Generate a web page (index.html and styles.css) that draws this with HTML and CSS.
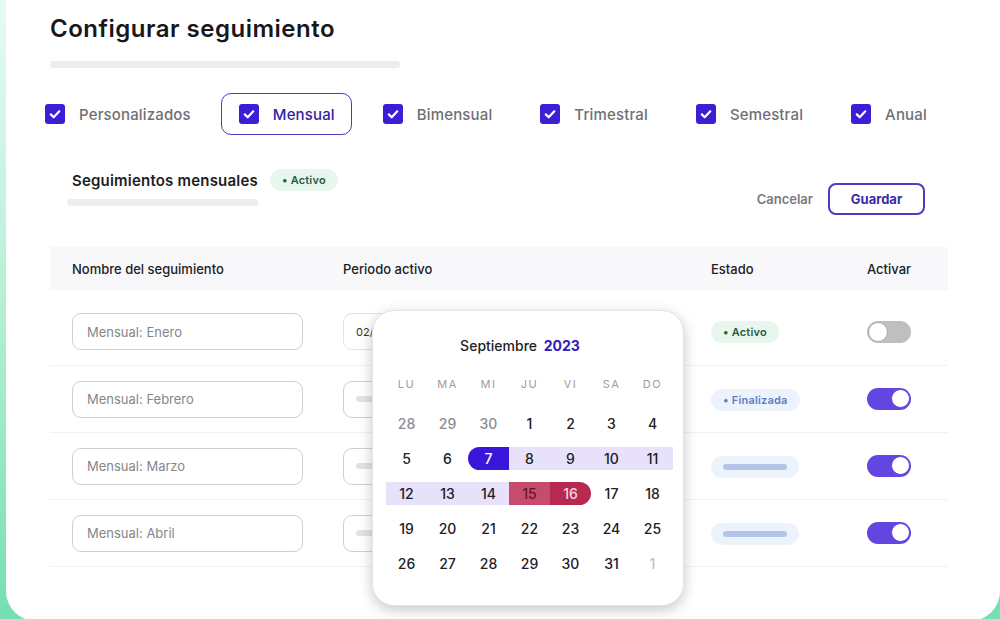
FILE: index.html
```html
<!DOCTYPE html>
<html>
<head>
  <title>Configurar seguimiento</title>
  <meta charset="UTF-8">
  <link rel="stylesheet" href="styles.css">
</head>
<body>
  <div class="card">
    <h1 class="title">Configurar seguimiento</h1>
    <div class="bar title-bar"></div>

    <div class="filters">
      <label class="filter">
        <svg class="check" viewBox="0 0 20 20"><rect width="20" height="20" rx="3"/><path d="M5.8 10.4l2.9 2.9 5.6-6"/></svg>
        <span>Personalizados</span>
      </label>
      <label class="filter active">
        <svg class="check" viewBox="0 0 20 20"><rect width="20" height="20" rx="3"/><path d="M5.8 10.4l2.9 2.9 5.6-6"/></svg>
        <span>Mensual</span>
      </label>
      <label class="filter">
        <svg class="check" viewBox="0 0 20 20"><rect width="20" height="20" rx="3"/><path d="M5.8 10.4l2.9 2.9 5.6-6"/></svg>
        <span>Bimensual</span>
      </label>
      <label class="filter">
        <svg class="check" viewBox="0 0 20 20"><rect width="20" height="20" rx="3"/><path d="M5.8 10.4l2.9 2.9 5.6-6"/></svg>
        <span>Trimestral</span>
      </label>
      <label class="filter">
        <svg class="check" viewBox="0 0 20 20"><rect width="20" height="20" rx="3"/><path d="M5.8 10.4l2.9 2.9 5.6-6"/></svg>
        <span>Semestral</span>
      </label>
      <label class="filter">
        <svg class="check" viewBox="0 0 20 20"><rect width="20" height="20" rx="3"/><path d="M5.8 10.4l2.9 2.9 5.6-6"/></svg>
        <span>Anual</span>
      </label>
    </div>

    <div class="section-head">
      <div class="section-left">
        <div class="section-title">
          <h2>Seguimientos mensuales</h2>
          <span class="badge green">&bull; Activo</span>
        </div>
        <div class="bar section-bar"></div>
      </div>
      <div class="actions">
        <button class="btn-text">Cancelar</button>
        <button class="btn-outline">Guardar</button>
      </div>
    </div>

    <div class="table">
      <div class="thead">
        <div>Nombre del seguimiento</div>
        <div>Periodo activo</div>
        <div>Estado</div>
        <div>Activar</div>
      </div>
      <div class="row first">
        <div><div class="field">Mensual: Enero</div></div>
        <div><div class="field period current">02/09/2023 - 30/09/2023</div></div>
        <div><span class="badge green">&bull; Activo</span></div>
        <div><span class="toggle"></span></div>
      </div>
      <div class="row">
        <div><div class="field">Mensual: Febrero</div></div>
        <div><div class="field period"><span class="ghost"></span></div></div>
        <div><span class="badge blue">&bull; Finalizada</span></div>
        <div><span class="toggle on"></span></div>
      </div>
      <div class="row">
        <div><div class="field">Mensual: Marzo</div></div>
        <div><div class="field period"><span class="ghost"></span></div></div>
        <div><span class="badge blue empty"><span class="ghost-bar"></span></span></div>
        <div><span class="toggle on"></span></div>
      </div>
      <div class="row">
        <div><div class="field">Mensual: Abril</div></div>
        <div><div class="field period"><span class="ghost"></span></div></div>
        <div><span class="badge blue empty"><span class="ghost-bar"></span></span></div>
        <div><span class="toggle on"></span></div>
      </div>
    </div>

    <div class="calendar">
      <div class="cal-head">Septiembre <b>2023</b></div>
      <div class="weekdays">
        <span>LU</span><span>MA</span><span>MI</span><span>JU</span><span>VI</span><span>SA</span><span>DO</span>
      </div>
      <div class="days">
        <div class="day muted"><span>28</span></div>
        <div class="day muted"><span>29</span></div>
        <div class="day muted"><span>30</span></div>
        <div class="day"><span>1</span></div>
        <div class="day"><span>2</span></div>
        <div class="day"><span>3</span></div>
        <div class="day"><span>4</span></div>

        <div class="day"><span>5</span></div>
        <div class="day"><span>6</span></div>
        <div class="day start"><span>7</span></div>
        <div class="day range"><span>8</span></div>
        <div class="day range"><span>9</span></div>
        <div class="day range"><span>10</span></div>
        <div class="day range"><span>11</span></div>

        <div class="day range"><span>12</span></div>
        <div class="day range"><span>13</span></div>
        <div class="day range"><span>14</span></div>
        <div class="day pick"><span>15</span></div>
        <div class="day pick-end"><span>16</span></div>
        <div class="day"><span>17</span></div>
        <div class="day"><span>18</span></div>

        <div class="day"><span>19</span></div>
        <div class="day"><span>20</span></div>
        <div class="day"><span>21</span></div>
        <div class="day"><span>22</span></div>
        <div class="day"><span>23</span></div>
        <div class="day"><span>24</span></div>
        <div class="day"><span>25</span></div>

        <div class="day"><span>26</span></div>
        <div class="day"><span>27</span></div>
        <div class="day"><span>28</span></div>
        <div class="day"><span>29</span></div>
        <div class="day"><span>30</span></div>
        <div class="day"><span>31</span></div>
        <div class="day faded"><span>1</span></div>
      </div>
    </div>
  </div>
</body>
</html>
```

FILE: styles.css
```css
html, body {
  margin: 0;
  height: 100%;
  overflow: hidden;
}

body {
  font-family: Inter, "Noto Sans", sans-serif;
  color: #1f1f24;
  background: linear-gradient(180deg, #e6fbf3 0%, #b4efd5 50%, #74dfb2 100%);
  padding-left: 6px;
}

.card {
  position: relative;
  width: 994px;
  height: 621px;
  background: #fff;
  border-radius: 0 0 30px 30px;
  box-sizing: border-box;
  overflow: hidden;
}

.title {
  margin: 0;
  padding: 14px 0 0 44px;
  font-size: 24px;
  line-height: 30px;
  font-weight: 600;
  letter-spacing: 0.5px;
  color: #17171c;
}

.bar {
  height: 7px;
  border-radius: 4px;
  background: #ececf1;
}

.title-bar {
  width: 350px;
  margin: 17px 0 0 44px;
}

/* filtros */
.filters {
  display: flex;
  align-items: center;
  gap: 13px;
  margin-top: 25px;
  padding-left: 21px;
}

.filter {
  display: flex;
  align-items: center;
  gap: 14px;
  height: 40px;
  padding: 0 16px 0 17px;
  border: 1.5px solid transparent;
  border-radius: 10px;
  font-size: 15px;
  font-weight: 500;
  letter-spacing: 0.15px;
  color: #6f6f74;
  cursor: pointer;
}

.filter.active {
  border-color: #4b3cc2;
  color: #33239f;
}

.check {
  width: 20px;
  height: 20px;
  flex-shrink: 0;
}

.check rect {
  fill: #3c1ed4;
}

.check path {
  fill: none;
  stroke: #fff;
  stroke-width: 2.2;
  stroke-linecap: round;
  stroke-linejoin: round;
}

/* cabecera de la seccion */
.section-head {
  display: flex;
  justify-content: space-between;
  align-items: flex-start;
  margin-top: 34px;
  padding: 0 75px 0 61px;
}

.section-title {
  display: flex;
  align-items: center;
  gap: 12px;
  padding-left: 5px;
}

.section-title h2 {
  margin: 0;
  font-size: 15px;
  font-weight: 600;
  letter-spacing: 0.2px;
  color: #1d1d22;
}

.section-bar {
  width: 191px;
  margin-top: 8px;
}

.badge {
  display: inline-flex;
  align-items: center;
  height: 22px;
  padding: 0 12px;
  border-radius: 11px;
  font-size: 11px;
  font-weight: 600;
  letter-spacing: 0.2px;
  white-space: nowrap;
}

.badge.green {
  background: #e7f7ee;
  color: #2c5a3c;
}

.badge.blue {
  background: #edf3fc;
  color: #5b7fc3;
}

.badge.empty {
  width: 88px;
  padding: 0;
  justify-content: center;
}

.ghost-bar {
  width: 64px;
  height: 6px;
  border-radius: 3px;
  background: #b3c6e9;
}

.actions {
  display: flex;
  align-items: center;
  gap: 15px;
  margin-top: 14px;
}

.btn-text {
  border: none;
  background: none;
  font-family: inherit;
  font-size: 13px;
  font-weight: 600;
  color: #7a7a80;
  padding: 0;
}

.btn-outline {
  width: 97px;
  height: 32px;
  border: 2px solid #4b3cc2;
  border-radius: 8px;
  background: #fff;
  font-family: inherit;
  font-size: 13px;
  font-weight: 700;
  color: #3a2ba8;
}

/* tabla */
.table {
  margin: 32px 0 0 44px;
  width: 898px;
}

.thead,
.row {
  display: grid;
  grid-template-columns: 271px 368px 156px 1fr;
  align-items: center;
  padding-left: 22px;
}

.thead {
  height: 43px;
  background: #f8f8fa;
  font-size: 13px;
  font-weight: 500;
  color: #202025;
}

.row {
  height: 66px;
  border-bottom: 1px solid #f1f1f3;
}

.row.first {
  height: 67px;
  padding-top: 8px;
}

.field {
  box-sizing: border-box;
  width: 231px;
  height: 37px;
  display: flex;
  align-items: center;
  padding-left: 14px;
  border: 1px solid #cfcfd3;
  border-radius: 9px;
  font-size: 13px;
  color: #86868b;
}

.field.period {
  width: 250px;
  padding-left: 12px;
  font-size: 11px;
  color: #333;
}

.field.current {
  border-color: #d3ebde;
}

.ghost {
  width: 40px;
  height: 6px;
  border-radius: 3px;
  background: #e3e3e6;
}

.toggle {
  position: relative;
  display: block;
  width: 44px;
  height: 22px;
  border-radius: 11px;
  background: #bfbfc2;
}

.toggle::after {
  content: "";
  position: absolute;
  top: 1px;
  left: 1px;
  width: 18px;
  height: 18px;
  border-radius: 50%;
  background: #fff;
  border: 1px solid #a9a9ad;
}

.toggle.on {
  background: #6345df;
}

.toggle.on::after {
  left: auto;
  right: 1px;
  top: 1px;
  width: 17px;
  height: 17px;
  border: 1.5px solid #6345df;
}

/* calendario */
.calendar {
  position: absolute;
  left: 366px;
  top: 310px;
  width: 312px;
  height: 296px;
  box-sizing: border-box;
  padding: 26px 13px 0;
  background: #fff;
  border: 1px solid #e4e4e7;
  border-radius: 22px;
  box-shadow: 0 4px 14px rgba(0, 0, 0, 0.22);
}

.cal-head {
  text-align: center;
  padding-right: 16px;
  font-size: 14px;
  line-height: 18px;
  font-weight: 500;
  color: #1f1f24;
}

.cal-head b {
  margin-left: 3px;
  color: #3220bd;
  font-weight: 700;
}

.weekdays {
  display: grid;
  grid-template-columns: repeat(7, 41px);
  margin-top: 20px;
  font-size: 11px;
  line-height: 18px;
  letter-spacing: 1.5px;
  color: #9c9ca2;
  text-align: center;
}

.days {
  display: grid;
  grid-template-columns: repeat(7, 41px);
  grid-auto-rows: 35px;
  margin-top: 13px;
}

.day {
  display: flex;
  align-items: center;
}

.day span {
  display: block;
  width: 100%;
  height: 23px;
  line-height: 23px;
  text-align: center;
  font-size: 14px;
  font-weight: 500;
  color: #202025;
}

.day.muted span {
  color: #8b8b90;
}

.day.faded span {
  color: #c2c2c6;
}

.day.range span {
  background: #e7e2f9;
}

.day.start span {
  background: #3a17d8;
  color: #fff;
  border-radius: 12px 0 0 12px;
}

.day.pick span {
  background: #c64c6e;
  color: #6c1129;
}

.day.pick-end span {
  background: #b62a51;
  color: #f9d5df;
  border-radius: 0 12px 12px 0;
}
```
